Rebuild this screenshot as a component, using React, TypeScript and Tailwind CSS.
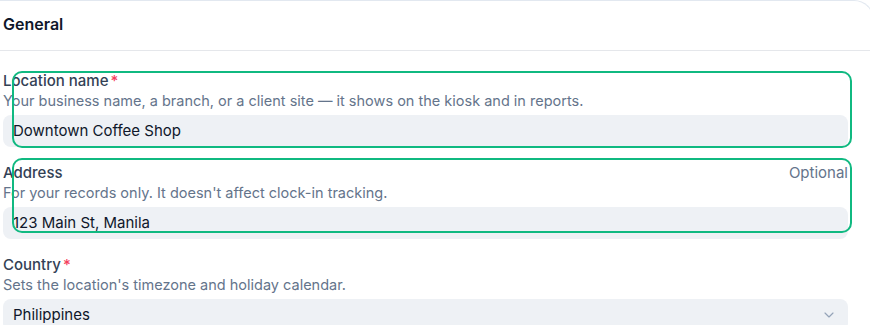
import { ChevronDown } from "lucide-react";

const font = { fontFamily: "Inter, 'Noto Sans', sans-serif" };

interface IFieldProps {
  label: string;
  help: string;
  required?: boolean;
  optional?: boolean;
  children: React.ReactNode;
}

const Field = (props: IFieldProps) => {
  const { label, help, required, optional, children } = props;
  return (
    <div className="flex flex-col">
      <div className="flex items-center justify-between h-5">
        <span className="text-[15px] font-medium text-[#334155] leading-5">
          {label}
          {required && <span className="text-[#f43f5e] ml-0.5">*</span>}
        </span>
        {optional && <span className="text-[15px] text-[#64748b] leading-5">Optional</span>}
      </div>
      <p className="text-[14.5px] text-[#64748b] leading-5 mb-1">{help}</p>
      {children}
    </div>
  );
};

export default function App() {
  return (
    <div className="w-[870px] h-[325px] bg-white overflow-hidden" style={font}>
      <div className="w-[874px] h-[360px] border-t border-r border-[#e2e8f0] rounded-tr-[20px] bg-white">
        {/* Header */}
        <div className="h-[50px] flex items-center pl-[3px] border-b border-[#e5e7eb]">
          <h2 className="text-[16px] font-semibold text-[#0f172a] -mt-1">General</h2>
        </div>

        {/* Fields */}
        <div className="relative pl-[3px] pr-[25px] pt-5 flex flex-col gap-4">
          <Field
            label="Location name"
            help="Your business name, a branch, or a client site — it shows on the kiosk and in reports."
            required
          >
            <div className="h-8 rounded-lg bg-[#eef1f5] px-2.5 flex items-center text-[15px] text-[#0f172a]">
              Downtown Coffee Shop
            </div>
          </Field>

          <Field
            label="Address"
            help="For your records only. It doesn't affect clock-in tracking."
            optional
          >
            <div className="h-8 rounded-lg bg-[#eef1f5] px-2.5 flex items-center text-[15px] text-[#0f172a]">
              123 Main St, Manila
            </div>
          </Field>

          <Field
            label="Country"
            help="Sets the location's timezone and holiday calendar."
            required
          >
            <div className="h-8 rounded-lg bg-[#eef1f5] pl-2.5 pr-[11px] flex items-center justify-between text-[15px] text-[#0f172a]">
              <span>Philippines</span>
              <ChevronDown className="w-4 h-4 text-[#94a3b8]" strokeWidth={1.75} />
            </div>
          </Field>

          {/* highlight overlays */}
          <div className="absolute left-[12px] top-[20px] w-[840px] h-[77px] rounded-[10px] border-2 border-[#10b981] pointer-events-none" />
          <div className="absolute left-[12px] top-[107px] w-[840px] h-[75px] rounded-[10px] border-2 border-[#10b981] pointer-events-none" />
        </div>
      </div>
    </div>
  );
}
